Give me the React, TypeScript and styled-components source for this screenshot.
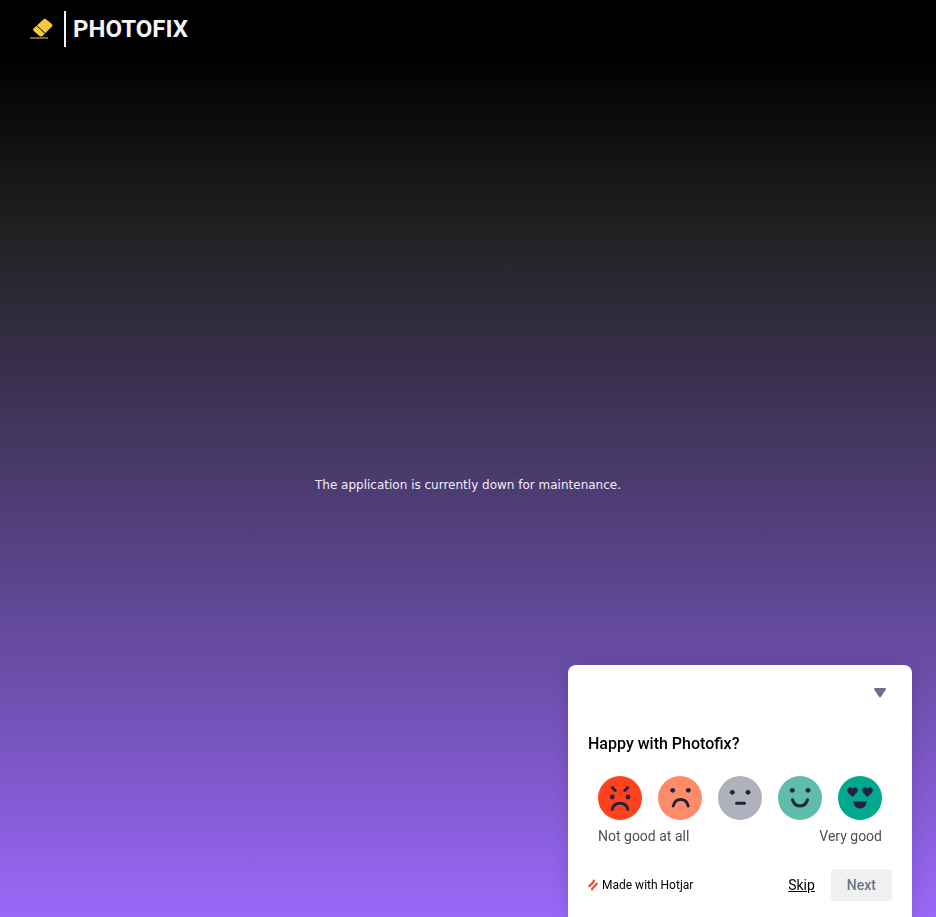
import React, { useState } from "react";
import styled, { createGlobalStyle } from "styled-components";

const GlobalStyle = createGlobalStyle`
  * { box-sizing: border-box; }
  body {
    margin: 0;
    font-family: Roboto, "Liberation Sans", sans-serif;
  }
`;

const Page = styled.div`
  min-height: 100vh;
  display: flex;
  flex-direction: column;
  background: linear-gradient(#000 0%, #000 6%, #242427 27%, #6e4fae 75%, #9b68fa 100%);
`;

const Header = styled.header`
  display: flex;
  height: 58px;
  padding: 0 30px;
`;

const Brand = styled.a`
  display: flex;
  align-items: center;
  color: #f4f4f4;
  text-decoration: none;
`;

const Divider = styled.span`
  width: 2px;
  height: 36px;
  margin: 0 7px 0 11px;
  background: #f4f4f4;
`;

const BrandName = styled.span`
  font: 700 24px/32px Roboto, "Noto Sans", sans-serif;
`;

const Main = styled.main`
  flex: 1;
  display: flex;
  align-items: center;
  justify-content: center;
  padding: 0 16px 6px;
`;

const Message = styled.p`
  margin: 0;
  color: #f1edf8;
  font: 400 12px/16px "DejaVu Sans", sans-serif;
`;

const Survey = styled.form`
  position: fixed;
  right: 24px;
  bottom: 0;
  width: 344px;
  max-width: calc(100% - 48px);
  padding: 8px 20px 16px;
  display: flex;
  flex-direction: column;
  border-radius: 8px 8px 0 0;
  background: #fff;
  color: #000;
  box-shadow: 0 2px 18px rgba(0, 0, 0, 0.14);
`;

const CollapseButton = styled.button`
  align-self: flex-end;
  display: grid;
  place-items: center;
  width: 24px;
  height: 40px;
  padding: 0;
  border: 0;
  background: none;
  cursor: pointer;
`;

const Question = styled.h1`
  margin: 19px 0 20px;
  font-size: 16px;
  line-height: 24px;
  font-weight: 500;
`;

const Scale = styled.fieldset`
  min-width: 0;
  margin: 0;
  padding: 0 10px;
  border: 0;
`;

const Faces = styled.div`
  display: flex;
  justify-content: space-between;
`;

const FaceLabel = styled.label`
  display: grid;
  height: 44px;
  border-radius: 50%;
  cursor: pointer;

  &:has(input:checked), &:has(input:focus-visible) {
    outline: 2px solid #323643;
    outline-offset: 2px;
  }
`;

const FaceInput = styled.input`
  grid-area: 1 / 1;
  width: 44px;
  height: 44px;
  margin: 0;
  opacity: 0;
  cursor: pointer;
`;

const FaceDrawing = styled.svg`
  grid-area: 1 / 1;
  width: 44px;
  height: 44px;
  pointer-events: none;
`;

const Legend = styled.div`
  display: flex;
  justify-content: space-between;
  margin-top: 6px;
  color: #505050;
  font-size: 14px;
  line-height: 20px;
`;

const Footer = styled.footer`
  display: flex;
  align-items: center;
  margin-top: 23px;
`;

const Credit = styled.a`
  display: flex;
  align-items: center;
  gap: 4px;
  margin-right: auto;
  color: #000;
  font-size: 12px;
  line-height: 16px;
  text-decoration: none;
`;

const SkipButton = styled.button`
  margin-right: 16px;
  padding: 0;
  border: 0;
  background: none;
  color: #000;
  font: 400 14px/20px Roboto, sans-serif;
  text-decoration: underline;
  cursor: pointer;
`;

const NextButton = styled.button`
  height: 32px;
  padding: 0 16px;
  border: 0;
  border-radius: 3px;
  background: #eff0f2;
  color: #6f7185;
  font: 500 14px/20px Roboto, sans-serif;
`;

const INK = "#22233f";

const faces = [
  {
    name: "Not good at all",
    color: "#ff421d",
    drawing: (
      <>
        <path d="m14.300 11.700 3 2.800M29.700 11.700l-3 2.800" />
        <Eyes y={21} left={14.300} right={30} />
        <path d="M14.200 33.300c2-8 13.600-8 15.600 0" />
      </>
    ),
  },
  {
    name: "Not good",
    color: "#ff8b68",
    drawing: (
      <>
        <Eyes y={14.300} left={14.700} right={30.300} />
        <path d="M15.200 30c2-8.800 13-8.800 15 0" />
      </>
    ),
  },
  {
    name: "Neutral",
    color: "#afb1bc",
    drawing: (
      <>
        <Eyes y={16.300} left={14.300} right={30} />
        <path d="M18.500 27.300h8" />
      </>
    ),
  },
  {
    name: "Good",
    color: "#60bda9",
    drawing: (
      <>
        <Eyes y={14.300} left={14.300} right={30} />
        <path d="M14.500 23.700c2 8.300 13 8.300 15 0" />
      </>
    ),
  },
  {
    name: "Very good",
    color: "#00a88d",
    drawing: (
      <>
        <Heart x={14.500} />
        <Heart x={29.500} />
        <path d="M16.500 26.500h11c0 6.500-11 6.500-11 0Z" fill={INK} strokeWidth="2" />
      </>
    ),
  },
];

function Eyes({ y, left, right }: { y: number; left: number; right: number }) {
  return (
    <g fill={INK} stroke="none">
      <circle cx={left} cy={y} r="2.400" />
      <circle cx={right} cy={y} r="2.400" />
    </g>
  );
}

function Heart({ x }: { x: number }) {
  return (
    <path
      transform={`translate(${x} 11)`}
      d="M0 10-4.700 5.200C-7 2-2.500-1.500 0 1.500c2.500-3 7 .5 4.700 3.700Z"
      fill={INK}
      stroke="none"
    />
  );
}

function EraserIcon() {
  return (
    <svg width="23" height="22" viewBox="0 0 23 22" aria-hidden="true">
      <path
        d="m3.700 10.600 9.900-9.400q1.200-1.100 2.400 0l5.800 4.900q1.300 1.200.1 2.500l-9.200 9.200q-1.500 1.500-3.200.2l-5.700-5Q2.500 11.800 3.700 10.600Z"
        fill="#f7ca3e"
      />
      <path d="m6.800 7.800 8.600 7.800" stroke="#000" strokeWidth="1" />
      <path d="M0 20h18" stroke="#a58b35" strokeWidth="1.500" />
    </svg>
  );
}

function HotjarIcon() {
  return (
    <svg width="10" height="12" viewBox="0 0 10 12" fill="none" stroke="#ee4d2f" strokeWidth="2.300" aria-hidden="true">
      <path d="M1.200 8.300C1.200 5 6 5.500 6 .8M4 11.300C4 6.800 8.800 7.500 8.800 3.800" />
    </svg>
  );
}

export default function App() {
  const [rating, setRating] = useState<string | null>(null);
  return (
    <>
      <GlobalStyle />
      <Page>
        <Header>
          <Brand href="#" aria-label="Photofix">
            <EraserIcon />
            <Divider />
            <BrandName>PHOTOFIX</BrandName>
          </Brand>
        </Header>
        <Main>
          <Message>The application is currently down for maintenance.</Message>
        </Main>
      </Page>
      <Survey onSubmit={(event) => event.preventDefault()}>
        <CollapseButton type="button" aria-label="Collapse survey">
          <svg width="14" height="10" viewBox="0 0 14 10" aria-hidden="true">
            <path d="M2 1h10L7 8.500Z" fill="#687083" stroke="#687083" strokeWidth="2" strokeLinejoin="round" />
          </svg>
        </CollapseButton>
        <Question id="question">Happy with Photofix?</Question>
        <Scale aria-labelledby="question">
          <Faces>
            {faces.map((face) => (
              <FaceLabel key={face.name}>
                <FaceInput
                  type="radio"
                  name="rating"
                  aria-label={face.name}
                  checked={rating === face.name}
                  onChange={() => setRating(face.name)}
                />
                <FaceDrawing viewBox="0 0 44 44" aria-hidden="true">
                  <circle cx="22" cy="22" r="22" fill={face.color} />
                  <g fill="none" stroke={INK} strokeWidth="3" strokeLinecap="round" strokeLinejoin="round">
                    {face.drawing}
                  </g>
                </FaceDrawing>
              </FaceLabel>
            ))}
          </Faces>
          <Legend>
            <span>Not good at all</span>
            <span>Very good</span>
          </Legend>
        </Scale>
        <Footer>
          <Credit href="#">
            <HotjarIcon />
            Made with Hotjar
          </Credit>
          <SkipButton type="button">Skip</SkipButton>
          <NextButton type="submit" disabled={rating === null}>Next</NextButton>
        </Footer>
      </Survey>
    </>
  );
}
